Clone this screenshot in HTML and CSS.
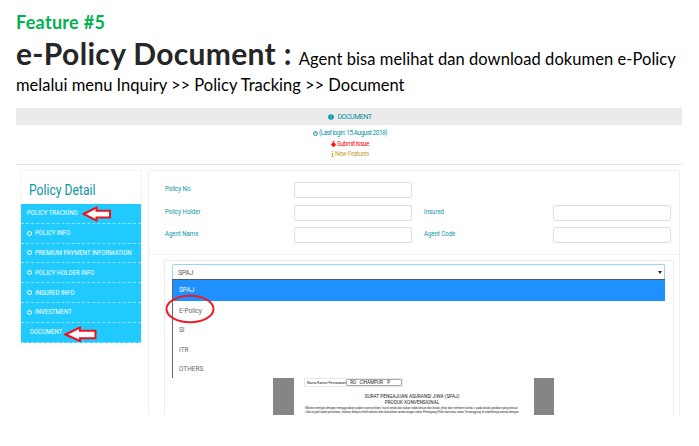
FILE: index.html
```html
<!DOCTYPE html>
<html lang="id">
<head>
<meta charset="utf-8">
<title>e-Policy Document</title>
<link rel="stylesheet" href="styles.css">
</head>
<body>
<header class="intro">
  <p class="feature">Feature #5</p>
  <p class="lead"><strong>e-Policy Document :</strong> <span class="desc first">Agent bisa melihat dan download dokumen e-Policy</span></p>
  <p class="desc second">melalui menu Inquiry &gt;&gt; Policy Tracking &gt;&gt; Document</p>
</header>
<main class="app">
  <div class="topbar"><svg width="6" height="6" viewBox="0 0 6 6"><circle cx="3" cy="3" r="2.8" fill="#0795a5"/><path d="M3 1v1M3 2.7v2" stroke="#bce5e9" stroke-width=".8"/></svg><span>DOCUMENT</span></div>
  <div class="status">
    <div class="login"><svg width="5" height="5" viewBox="0 0 5 5"><circle cx="2.5" cy="2.5" r="2" fill="none" stroke="currentColor" stroke-width=".9"/><path d="M2.5 1.2v1.5h1" fill="none" stroke="currentColor" stroke-width=".6"/></svg><span>(Last login: 15 August 2018)</span></div>
    <div class="issue"><svg width="5" height="6" viewBox="0 0 5 6"><path d="M1.7 0h1.6v1.3H1.7zM.8 1.8h3.4v3.2l-1 .8H1.8l-1-.8zM0 3.1h5v.7H0z" fill="currentColor"/></svg><span>Submit Issue</span></div>
    <div class="new"><svg width="3" height="6" viewBox="0 0 3 6"><path d="M1 0h1v1H1zM.5 2H2v3h.7v.7H.4V5H1V2.7H.5z" fill="currentColor"/></svg><span>New Features</span></div>
  </div>
  <div class="columns">
    <aside class="side">
      <h2>Policy Detail</h2>
      <ul>
        <li class="head"><span>POLICY TRACKING</span><svg class="arrow" width="30" height="16" viewBox="0 0 30 16"><path d="M1.5 8 14.5 1.5v3.3h13.5v6.6H14.5v3.1z" fill="#fff" stroke="#f01018" stroke-width="2"/></svg></li>
        <li><i></i><span>POLICY INFO</span></li>
        <li><i></i><span>PREMIUM PAYMENT INFORMATION</span></li>
        <li><i></i><span>POLICY HOLDER INFO</span></li>
        <li><i></i><span>INSURED INFO</span></li>
        <li><i></i><span>INVESTMENT</span></li>
        <li class="doc"><span>DOCUMENT</span><svg class="arrow low" width="33" height="16" viewBox="0 0 33 16"><path d="M1.5 8.5 16 1.5v3.3h15.5v7.4H16v2.8z" fill="#fff" stroke="#f01018" stroke-width="2"/></svg></li>
      </ul>
    </aside>
    <section class="main">
      <div class="form">
        <label>Policy No</label><div class="input"></div><label></label><div></div>
        <label>Policy Holder</label><div class="input"></div><label>Insured</label><div class="input"></div>
        <label>Agent Name</label><div class="input"></div><label>Agent Code</label><div class="input"></div>
      </div>
      <div class="viewer">
        <div class="select"><span>SPAJ</span><b></b></div>
        <ul class="options">
          <li class="selected"><span>SPAJ</span></li>
          <li><span>E-Policy</span><svg class="ring" width="50" height="30" viewBox="0 0 50 30"><ellipse cx="25" cy="15" rx="23.5" ry="13.2" fill="none" stroke="#ed1c24" stroke-width="2"/></svg></li>
          <li><span>SI</span></li>
          <li><span>ITR</span></li>
          <li><span>OTHERS</span></li>
        </ul>
        <div class="pdf">
          <div class="paper">
            <div class="office"><span>Nama Kantor Pemasaran</span><span class="value">RO &nbsp; CIHAMPUR &nbsp; &nbsp;P</span></div>
            <div class="title">SURAT PENGAJUAN ASURANSI JIWA (SPAJ)<br>PRODUK KONVENSIONAL</div>
            <div class="note">- Mohon mengisi dengan menggunakan pulpen warna hitam, huruf cetak dan bukan tidak keluar dari kotak, jelas dan memberi tanda √ pada kotak jawaban yang sesuai.</div>
            <div class="note">- Jika terjadi salah penulisan, mohon dihapus lebih dahulu dan bubuhkan tanda tangan calon Pemegang Polis dan/atau calon Tertanggung di sebelahnya sesuai dengan</div>
          </div>
        </div>
      </div>
    </section>
  </div>
</main>
</body>
</html>
```
FILE: styles.css
```css
* { box-sizing: border-box; }
body { margin: 0; width: 699px; height: 446px; overflow: hidden; background: #fff; font-family: Roboto, sans-serif; }
p, h2, ul { margin: 0; padding: 0; }
ul { list-style: none; }

.intro { height: 108px; padding: 11px 0 0 16px; font-family: Lato, sans-serif; white-space: nowrap; }
.feature { height: 22px; line-height: 22px; font-size: 18px; font-weight: 700; letter-spacing: .3px; color: #00b050; }
.lead { height: 39px; line-height: 40px; }
.lead strong { font-size: 30px; letter-spacing: .33px; color: #262626; }
.desc { font-size: 16.5px; color: #000; }
.first { margin-left: 3px; letter-spacing: .06px; }
.second { height: 26px; line-height: 26px; }

.app { width: 666px; height: 307px; margin-left: 16px; overflow: hidden; font-size: 7px; color: #0795a5; white-space: nowrap; }
.topbar { height: 17px; display: flex; align-items: center; justify-content: center; gap: 3px; padding-left: 2px; background: #ebebeb; font-size: 7.2px; letter-spacing: -.58px; }
.status { height: 40px; padding: 3px 0 0 2px; border-bottom: 1px solid #dce4e4; font-size: 6.5px; letter-spacing: -.48px; }
.status div { height: 10.5px; display: flex; align-items: center; justify-content: center; gap: 1px; }
.issue { color: #ff1010; }
.new { color: #c8a840; }

.columns { display: flex; height: 250px; padding: 5px 2px 0 4px; gap: 6px; }
.side { width: 122px; height: 178px; border: 1px solid #f4f4f4; border-width: 1px 1px 0; }
.side h2 { height: 33px; line-height: 38px; padding-left: 8px; font-size: 15px; font-weight: 400; transform: scaleX(.81); transform-origin: 8px 50%; }
.side ul { background: #20caff; color: #fff; }
.side li { position: relative; height: 19.8px; display: flex; align-items: center; gap: 4px; padding-left: 6px; border-bottom: 1px dashed #8ce4ff; }
.side li span, .options span, .form label { transform: scaleX(.86); transform-origin: 0 50%; }
.side i { flex: none; width: 5px; height: 5px; border: 1px solid #fff; border-radius: 50%; }
.side i + span { margin-left: -1px; }
.side .doc { padding-left: 9px; }
.arrow { position: absolute; left: 61px; top: 2px; }
.low { left: 43px; top: 3px; }

.main { flex: 1; border: 1px solid #efefef; border-bottom: 0; border-radius: 2px 2px 0 0; }
.form { height: 84px; display: grid; grid-template-columns: 129px 118px 141px 118px; grid-auto-rows: 16px; row-gap: 6.5px; padding: 11px 0 0 16px; border-bottom: 1px solid #f2f2f2; }
.form label { padding-top: 3px; line-height: 9px; }
.form label:nth-child(4n+3) { padding-left: 14px; }
.input { border: 1px solid #dedede; border-radius: 2px; }
.viewer { width: 510px; height: 161px; margin: 5px 0 0 15px; padding: 3px 8px 0 7px; border: 1px solid #ededed; border-bottom: 0; color: #666; }
.select { height: 15px; display: flex; align-items: center; justify-content: space-between; padding: 1px 2px 0 5px; border: 1px solid #9dd3f6; border-bottom: 0; border-radius: 2px 2px 0 0; letter-spacing: -.4px; }
.select b { border: 2px solid transparent; border-top: 3px solid #222; border-bottom: 0; }
.options { height: 99px; border-left: 1px solid #5d6672; border-top: 1px solid #4b5968; }
.options li { position: relative; height: 19.5px; line-height: 20px; padding-left: 6px; }
.options span { display: inline-block; transform: scaleX(.92); }
.options .selected { height: 20.5px; line-height: 21px; background: #1e90ff; color: #fff; }
.ring { position: absolute; left: -8px; top: -7px; }

.pdf { width: 281px; height: 37px; margin-left: 101px; border: solid #858585; border-width: 0 20px 0 21px; }
.paper { width: 226px; padding-left: 10px; color: #222; }
.office { width: 99px; height: 9px; display: flex; align-items: center; justify-content: space-between; padding-left: 2px; border: 1px solid #e8e8e8; font-size: 3.5px; }
.value { width: 56px; padding-left: 3px; border: 1px solid #aaa; border-radius: 1px; font-size: 4.6px; line-height: 5px; }
.title { width: 216px; padding-top: 6px; text-align: center; font-size: 6px; line-height: 6px; transform: scaleX(.79); }
.note { height: 4px; font-size: 2.9px; line-height: 4px; }
.title + .note { margin-top: 1px; }
```
